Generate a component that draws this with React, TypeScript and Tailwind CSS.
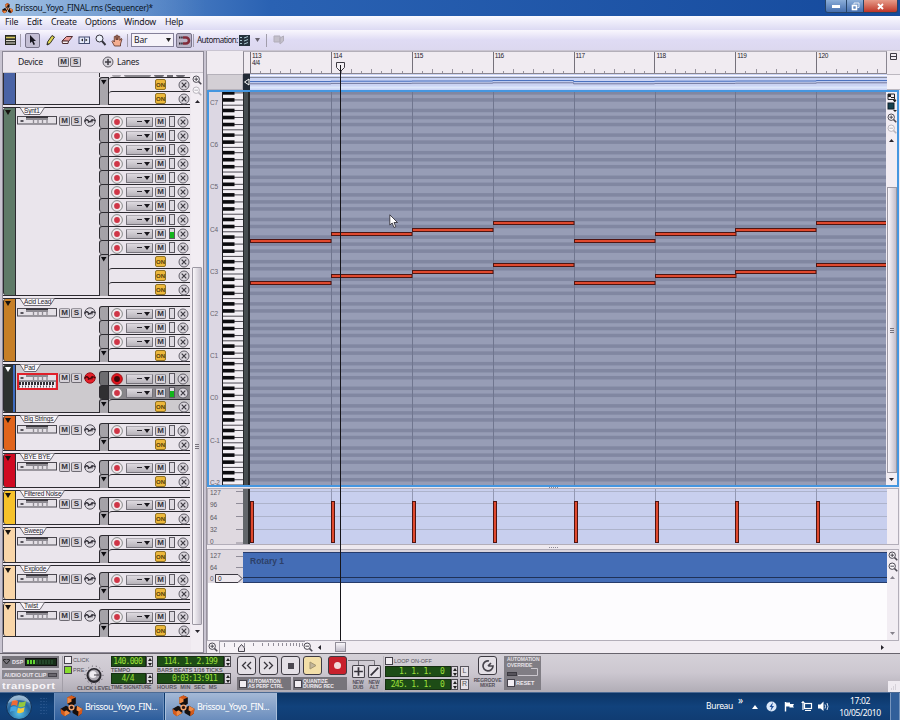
import React from "react";

const SANS = "font-['Liberation_Sans',Arial,sans-serif]";
const UI = "font-['Noto_Sans','Open_Sans',sans-serif]";

const BAR = 80.9;
const BARS = [0, 1, 2, 3, 4, 5, 6, 7];

/* ---------- small drawings ---------- */

function Propeller({ size }: { size: number }) {
  return (
    <svg width={size} height={size} viewBox="0 0 24 24" className="shrink-0">
      {[0, 120, 240].map((a) => (
        <g key={a} transform={`rotate(${a} 12 13)`}>
          <path d="M7.5 2.5 L12 .5 L16.500 2.500 V9 L12 12 L7.500 9Z" fill="#15100f" />
          <path d="M7.500 2.500 L12 .5 V7 L7.500 9Z" fill="#f08a45" />
          <path d="M12 .5 L16.500 2.500 L12 4.500 L7.500 2.500Z" fill="#d45a1c" />
        </g>
      ))}
      <circle cx="12" cy="13" r="3.200" fill="#f4a36c" />
      <circle cx="12" cy="13" r="1.700" fill="#2a1712" />
    </svg>
  );
}

function Zoom({ plus, dim }: { plus?: boolean; dim?: boolean }) {
  const c = dim ? "#b9b5bd" : "#4b4852";
  return (
    <svg width="10" height="10" viewBox="0 0 10 10" className="shrink-0">
      <circle cx="4.2" cy="4.2" r="3.2" fill="#faf8fb" stroke={c} />
      <path d={plus ? "M2.400 4.200H6M4.200 2.400V6" : "M2.400 4.200H6"} stroke={c} />
      <path d="M6.600 6.600L9.300 9.300" stroke={c} strokeWidth="1.500" />
    </svg>
  );
}

function Caret({ dir = "down", dim }: { dir?: "up" | "down" | "left" | "right"; dim?: boolean }) {
  const d = { up: "M0 4L2.500 1L5 4Z", down: "M0 1L2.500 4L5 1Z", left: "M4 0L1 2.500L4 5Z", right: "M1 0L4 2.500L1 5Z" }[dir];
  return (
    <svg width="5" height="5" viewBox="0 0 5 5" className="shrink-0">
      <path d={d} fill={dim ? "#85818b" : "#26232b"} />
    </svg>
  );
}

function Mini({ label }: { label: string }) {
  return (
    <div className={`${SANS} flex h-[10px] w-[11px] shrink-0 items-center justify-center rounded-[2px] border border-[#6d6a72] border-t-[#99969e] bg-[#d6d2d9] text-[8px] font-bold leading-none text-[#35323a]`}>
      {label}
    </div>
  );
}

function Cross() {
  return (
    <svg width="12" height="12" viewBox="0 0 12 12" className="shrink-0">
      <circle cx="6" cy="6" r="5" fill="#d9d5dc" stroke="#625f68" />
      <path d="M3.700 3.700L8.300 8.300M8.300 3.700L3.700 8.300" stroke="#3f3c44" strokeWidth="1.200" />
    </svg>
  );
}

function Record({ armed }: { armed?: boolean }) {
  return (
    <svg width="12" height="12" viewBox="0 0 12 12" className="shrink-0">
      <circle cx="6" cy="6" r="5.400" fill={armed ? "#e0141c" : "#f0e8ec"} stroke={armed ? "#8e0c12" : "#6c7371"} strokeWidth=".8" />
      <circle cx="6" cy="6" r="2.900" fill={armed ? "#3d0708" : "#cf3546"} />
    </svg>
  );
}

function AutoRec({ armed }: { armed?: boolean }) {
  return (
    <svg width="12" height="12" viewBox="0 0 12 12" className="shrink-0">
      <circle cx="6" cy="6" r="5.200" fill={armed ? "#e5202a" : "#ddd9e0"} stroke={armed ? "#9c1118" : "#55525b"} />
      <path d="M.500 6.500Q2.500 3.500 4 5.500T6.500 6.500T8.500 5T11.500 6" fill="none" stroke={armed ? "#4d0709" : "#34313a"} strokeWidth="1.400" />
      <path d="M4 8L5 6.500M8 7.500V4" stroke={armed ? "#4d0709" : "#34313a"} />
    </svg>
  );
}

function Device({ keys }: { keys?: boolean }) {
  return (
    <svg width="41" height={keys ? 17 : 9} className="shrink-0">
      <rect x=".5" y=".5" width="39" height="7.500" fill="#e4e0e6" stroke="#4b4850" />
      <rect x="9" y="0" width="22" height="2.500" fill="#3b383f" />
      <path d="M9 3.500H31" stroke="#8b8890" />
      <path d="M3.500 5h3" stroke="#57545c" strokeWidth="2" />
      <path d="M16.500 3v4M21 3v4M25.500 3v4M30 3v4" stroke="#8e8b93" strokeWidth="1.300" />
      {keys && (
        <>
          <rect x="2" y="9" width="36" height="6" fill="#f2eef3" />
          <path d="M2 10.500H38" stroke="#302d34" strokeWidth="3" strokeDasharray="2 1" />
          <path d="M2 13.500H38" stroke="#5a575f" strokeWidth="2" strokeDasharray="1 2" />
          <rect x="1" y="1" width="39" height="15" fill="none" stroke="#e0202a" strokeWidth="2" />
        </>
      )}
    </svg>
  );
}

/* ---------- track list ---------- */

type Lane = "lane" | "live" | "armed" | "selected" | "on";

function LaneRow({ kind, first }: { kind: Lane; first: boolean }) {
  if (kind === "on") {
    return (
      <div className="flex h-[14px]">
        <div className={`w-[10px] shrink-0 border-x border-[#2c2a30] bg-[#a9a6ac] ${first ? "rounded-tl-[3px] border-t" : ""}`}>
          {first && (
            <svg width="8" height="8" viewBox="0 0 8 8">
              <path d="M1 2H6.500L3.700 6.500Z" fill="#0d0c10" />
            </svg>
          )}
        </div>
        <div className="flex flex-1 items-center rounded-tl-[3px] border-t border-[#2c2a30]">
          <div className={`${SANS} ml-[46px] flex h-[11px] w-[11px] items-center justify-center rounded-[2px] border border-[#8f7226] bg-[#edb83b] text-[6px] font-bold leading-none text-[#553e0b]`}>
            ON
          </div>
          <div className="ml-[12px]"><Cross /></div>
        </div>
      </div>
    );
  }
  const sel = kind === "selected";
  return (
    <div className="flex h-[14px]">
      <div className={`w-[10px] shrink-0 rounded-l-[3px] border border-b-0 border-[#2c2a30] ${sel ? "bg-[#302f32]" : kind === "armed" ? "bg-[#6d6c70]" : "bg-[#a5a2a8]"}`} />
      <div className={`flex flex-1 items-center border-t border-[#2c2a30] pl-[2px] ${sel ? "bg-[#89868b]" : ""}`}>
        <Record armed={kind === "armed"} />
        <div className="ml-[3px] flex h-[10px] w-[27px] items-center justify-end rounded-[1px] border border-[#75727a] border-t-[#aca9b0] bg-gradient-to-b from-[#dedae0] to-[#b7b3ba] pr-[2px]">
          <i className="mr-[2px] h-[1px] w-[5px] bg-[#2d2a31]" />
          <svg width="6" height="4"><path d="M0 0H6L3 4Z" fill="#18161c" /></svg>
        </div>
        <div className="ml-[2px]"><Mini label="M" /></div>
        <div className="ml-[3px] flex h-[11px] w-[6px] flex-col justify-end border border-[#5b5860] bg-[#dedae1]">
          {(kind === "live" || sel) && <i className="h-[6px] bg-[#12b51b]" />}
        </div>
        <div className="ml-[2px]"><Cross /></div>
      </div>
    </div>
  );
}

type TrackData = { name: string; head: string; color: string; tab: number; lanes: Lane[]; active?: boolean };

const TRACKS: TrackData[] = [
  { name: "Synt1", head: "h-[9px]", color: "bg-[#5f7a68]", tab: 18, lanes: ["lane", "lane", "lane", "lane", "lane", "lane", "lane", "lane", "live", "lane", "on", "on", "on"] },
  { name: "Acid Lead", head: "h-[10px]", color: "bg-[#c67f27]", tab: 28, lanes: ["lane", "lane", "lane", "on"] },
  { name: "Pad", head: "h-[9px]", color: "bg-[#2e3230]", tab: 14, lanes: ["armed", "selected", "on"], active: true },
  { name: "Big Strings", head: "h-[10px]", color: "bg-[#e0641c]", tab: 32, lanes: ["lane", "on"] },
  { name: "BYE BYE", head: "h-[9px]", color: "bg-[#cf0a22]", tab: 28, lanes: ["lane", "on"] },
  { name: "Filtered Noise", head: "h-[9px]", color: "bg-[#f6c22b]", tab: 38, lanes: ["lane", "on"] },
  { name: "Sweep", head: "h-[10px]", color: "bg-[#f9d6a9]", tab: 20, lanes: ["lane", "on"] },
  { name: "Explode", head: "h-[9px]", color: "bg-[#f9d6a9]", tab: 24, lanes: ["lane", "on"] },
  { name: "Twist", head: "h-[9px]", color: "bg-[#f9d6a9]", tab: 18, lanes: ["lane", "on"] },
];

function Track({ t }: { t: TrackData }) {
  const on = t.lanes.indexOf("on");
  return (
    <div className="flex shrink-0 flex-col pt-[2px]">
      <div className={`flex border-y border-[#2c2a30] ${t.active ? "bg-[#cdcace]" : "bg-[#eae5ec]"}`}>
        <div className={`flex w-[13px] shrink-0 rounded-l-[3px] border-x border-[#2c2a30] ${t.color}`}>
          <svg width="8" height="9" viewBox="0 0 8 9" className="shrink-0">
            <path d="M1 2H7L4 7Z" fill={t.active ? "#fff" : "#17120f"} />
          </svg>
          {t.active && <i className="ml-[1px] w-[3px] bg-[#3e6cc0]" />}
        </div>
        <div className="flex flex-1 flex-col">
          <div className={`${t.head} -mt-[3px] flex`}>
            <div className="relative ml-[4px] mt-[2px] h-[8px]">
              <svg width={t.tab + 8} height="8" className="block">
                <path d={`M0 .5L4.500 7.500H${t.tab + 2}L${t.tab + 6.5} .5`} fill="#faf7fb" stroke="#4b4850" strokeWidth=".8" />
              </svg>
              <span className={`${SANS} absolute left-[4px] top-0 whitespace-nowrap text-[6.500px] leading-[7px] tracking-[-0.2px] text-[#26232b]`}>{t.name}</span>
            </div>
          </div>
          <div className="flex">
            <div className="flex w-[83px] shrink-0 items-start pl-[1px] pt-[2px]">
              <Device keys={t.active} />
              <div className="ml-[1px]"><Mini label="M" /></div>
              <div className="ml-[1px]"><Mini label="S" /></div>
              <div className="-mt-[1px] ml-[2px]"><AutoRec armed={t.active} /></div>
            </div>
            <div className="-mb-[1px] flex-1">
              {t.lanes.map((k, i) => <LaneRow key={i} kind={k} first={i === on} />)}
            </div>
          </div>
        </div>
      </div>
    </div>
  );
}

function TrackPanel() {
  return (
    <div className="flex w-[202px] shrink-0 flex-col border border-[#8d8996] bg-[#eee8ef]">
      <div className={`${UI} flex h-[21px] shrink-0 items-center border-b border-[#c9c5cd] text-[8.600px] tracking-[-0.3px] text-[#24222a]`}>
        <span className="ml-[15px] w-[40px]">Device</span>
        <Mini label="M" />
        <div className="ml-[1px]"><Mini label="S" /></div>
        <svg width="12" height="12" className="ml-[21px]">
          <circle cx="6" cy="6" r="5" fill="#d9d5dc" stroke="#625f68" />
          <path d="M3 6H9M6 3V9" stroke="#3f3c44" strokeWidth="1.500" />
        </svg>
        <span className="ml-[3px]">Lanes</span>
      </div>
      <div className="flex min-h-0 flex-1">
        <div className="flex w-[187px] shrink-0 flex-col overflow-hidden">
          <div className="flex h-[32px] shrink-0 border-b border-[#2c2a30]">
            <div className="w-[13px] shrink-0 border-x border-[#2c2a30] bg-[#4a63a5]" />
            <div className="w-[83px] bg-[#eae5ec]" />
            <div className="flex-1">
              <div className="flex h-[4px] items-end gap-[3px] border-l border-[#2c2a30] pl-[12px]">
                <i className="h-[2px] w-[9px] rounded-b bg-[#a7a3aa]" />
                <i className="h-[2px] w-[27px] rounded-b bg-[#8b888f]" />
                <i className="h-[2px] w-[10px] rounded-b bg-[#6d6a72]" />
                <i className="h-[2px] w-[6px] bg-[#6d6a72]" />
                <i className="h-[2px] w-[9px] rounded-b bg-[#6d6a72]" />
              </div>
              <LaneRow kind="on" first />
              <LaneRow kind="on" first={false} />
            </div>
          </div>
          {TRACKS.map((t) => <Track key={t.name} t={t} />)}
        </div>
        <div className="ml-[1px] flex flex-1 flex-col items-center bg-[#f2edf3] pt-[2px]">
          <Zoom plus />
          <div className="mt-[1px]"><Zoom dim /></div>
          <div className="mt-[3px]"><Caret dir="up" /></div>
          <div className="mt-[163px] flex h-[358px] w-[10px] items-center justify-center rounded-[1px] border border-[#9c98a3] bg-gradient-to-r from-[#faf7fb] to-[#c7c2cd]">
            <div className="flex flex-col gap-[1px]">
              <i className="h-px w-[4px] bg-[#77737d]" /><i className="h-px w-[4px] bg-[#77737d]" /><i className="h-px w-[4px] bg-[#77737d]" />
            </div>
          </div>
          <div className="mt-[4px]"><Caret /></div>
        </div>
      </div>
    </div>
  );
}

/* ---------- arrangement ---------- */

const SEMI = 42.2 / 12;
const OCTAVES = [8, 7, 6, 5, 4, 3, 2, 1, 0, -1, -2];
const floorOf = (o: number) => 105.2 - 92 + (7 - o) * 42.2;
const BLACK = [1, 3, 6, 8, 10];

function Keyboard() {
  return (
    <svg width="21" height="393" className="block shrink-0 bg-[#f3eff4]">
      {OCTAVES.map((o) => (
        <g key={o}>
          {[0, 5].map((k) => <path key={k} d={`M0 ${floorOf(o) - k * SEMI}H21`} stroke="#39363e" strokeWidth=".9" />)}
          {BLACK.map((k) => {
            const y = floorOf(o) - (k + 0.5) * SEMI;
            return (
              <g key={k}>
                <path d={`M12 ${y}H21`} stroke="#39363e" strokeWidth=".9" />
                <rect x="0" y={y - 1.8} width="12.500" height="3.600" fill="#0c0b0f" />
              </g>
            );
          })}
        </g>
      ))}
      <path d="M.5 0V393" stroke="#1b191f" />
    </svg>
  );
}

const STEPS = [3, 1, 0, -2, 3, 1, 0, -2];
const NOTE_Y = STEPS.map((s) => 137 + s * 3.5);

function Roll() {
  return (
    <svg width="636" height="393" className="block shrink-0 bg-[#979db6]">
      {OCTAVES.map((o) => BLACK.map((k) => (
        <rect key={`${o}${k}`} x="0" y={floorOf(o) - (k + 1) * SEMI} width="636" height={SEMI} fill="#8187a1" />
      )))}
      {BARS.slice(1).map((b) => <path key={b} d={`M${Math.round(b * BAR) + 0.5} 0V393`} stroke="#70768f" />)}
      {BARS.map((b) => [0, 42.2].map((dy) => (
        <rect key={`${b}-${dy}`} x={Math.round(b * BAR) + 0.5} y={Math.round(NOTE_Y[b] + dy) - 0.5} width="80.500" height="3" fill="#e0492e" stroke="#4f1512" />
      )))}
    </svg>
  );
}

function Ruler() {
  return (
    <div className="flex h-[23px] shrink-0">
      <div className="w-[36px] shrink-0" />
      <div className="flex w-[644px] shrink-0 border-x border-b border-t border-[#8a8690] border-t-[#b3afb9] bg-[#f0ebf1]">
        <div className="w-[6px] shrink-0" />
        <div className="flex w-[636px] overflow-hidden">
          {BARS.map((b) => (
            <div key={b} className={`${SANS} flex w-[80.900px] shrink-0 flex-col justify-between border-l border-[#75717b] text-[6.500px] leading-[7px] tracking-[-0.4px] text-[#26232b]`}>
              <div className="pl-[1px]">{113 + b}{b === 0 && <div>4/4</div>}</div>
              <div className="flex items-end">
                {[1, 2, 3, 4, 5, 6, 7].map((i) => (
                  <i key={i} className={`w-[10.100px] border-r border-[#98949f] ${i % 2 ? "h-[2px]" : "h-[4px]"}`} />
                ))}
              </div>
            </div>
          ))}
        </div>
      </div>
      <div className="flex flex-1 justify-center pt-[2px]">
        <svg width="9" height="8"><path d="M1.500 .5H7.500V6.500H1.500ZM1.500 3.500H7.500" fill="none" stroke="#3d3a43" /></svg>
      </div>
    </div>
  );
}

function Overview() {
  const line = (base: number) => BARS.map((b) => `${b ? "L" : "M"}${b * BAR} ${base + STEPS[b] * 0.2}H${(b + 1) * BAR}`).join("");
  return (
    <div className="flex h-[16px] shrink-0">
      <div className="w-[36px] shrink-0 border border-[#b5b1ba] bg-[#d3cfd5]" />
      <div className="flex w-[7px] shrink-0 items-center bg-[#222a36]">
        <svg width="7" height="8"><path d="M6 1L1.500 4L6 7Z" fill="none" stroke="#fff" /></svg>
      </div>
      <svg width="637" height="16" className="shrink-0 bg-[#cbd4f4]">
        <path d="M0 1.500H637" stroke="#fbf9fd" />
        <path d="M0 3.500H637" stroke="#858a9c" />
        <path d={line(7)} fill="none" stroke="#3e68ba" />
        <path d={line(9.2)} fill="none" stroke="#72779c" />
        <path d="M0 13.500H637" stroke="#dde7fb" strokeWidth="2" />
      </svg>
      <div className="flex-1 border-y border-[#bcb8c0] bg-[#f5f1f6]" />
    </div>
  );
}

function PianoRoll() {
  return (
    <div className="flex h-[397px] w-[692px] shrink-0 overflow-hidden border-2 border-[#4596e0]">
      <div className={`${SANS} flex w-[13px] shrink-0 flex-col bg-[#dcd7e3] pt-[7px] text-[6.500px] text-[#67646f]`}>
        {["C7", "C6", "C5", "C4", "C3", "C2", "C1", "C0", "C-1", "C-2"].map((c) => (
          <div key={c} className="h-[42.200px] shrink-0 pl-[1px] leading-[8px] tracking-[-0.3px]">{c}</div>
        ))}
      </div>
      <Keyboard />
      <div className="w-[7px] shrink-0 border-x border-r-2 border-[#25272a] bg-[#474d50]" />
      <Roll />
      <div className="flex flex-1 flex-col items-center overflow-hidden bg-[#f2edf3] pt-[1px]">
        <svg width="10" height="9" className="shrink-0"><path d="M1 1H7.500V6.500H1Z" fill="#f2edf3" stroke="#22262c" /><path d="M1 1H4V4H1Z" fill="#222" /><path d="M4 4.500H8M6.500 7L9 7L7.700 9Z" stroke="#222" /></svg>
        <svg width="10" height="10" className="shrink-0"><rect x="1" y="1" width="6" height="6" fill="#15404e" stroke="#0e1e2a" /><path d="M6 8H10L8 10Z" fill="#222" /></svg>
        <div className="mt-[1px]"><Zoom plus /></div>
        <div className="mt-[1px]"><Zoom dim /></div>
        <div className="mt-[4px]"><Caret dir="up" /></div>
        <div className="mt-[44px] flex h-[286px] w-[10px] shrink-0 items-center justify-center border border-[#9c98a3] bg-gradient-to-r from-[#faf7fb] to-[#c3becb]">
          <div className="flex flex-col gap-[1px]">
            <i className="h-px w-[4px] bg-[#77737d]" /><i className="h-px w-[4px] bg-[#77737d]" /><i className="h-px w-[4px] bg-[#77737d]" />
          </div>
        </div>
        <div className="mt-[4px]"><Caret /></div>
      </div>
    </div>
  );
}

function Velocity() {
  return (
    <div className="flex h-[57px] w-[692px] shrink-0 border border-[#b3aeb9] bg-[#dfd9e0]">
      <div className={`${SANS} flex w-[35px] shrink-0 justify-between text-[6.500px] text-[#5b5863]`}>
        <div className="flex flex-col pl-[2px]">
          {["127", "96", "64", "32", "0"].map((v) => <div key={v} className="h-[12.300px] shrink-0 leading-[7px]">{v}</div>)}
        </div>
        <svg width="7" height="55"><path d="M0 2.500H7M0 14.500H7M0 27.500H7M0 40.500H7M0 54H7" stroke="#908c98" /></svg>
      </div>
      <div className="w-[7px] shrink-0 border-r-2 border-[#25272a] bg-[#62666b]" />
      <svg width="637" height="55" className="shrink-0 bg-[#c8cfee]">
        <path d="M0 2.500H637M0 14.500H637M0 27.500H637M0 40.500H637" stroke="#adb3cb" />
        {BARS.slice(1).map((b) => <path key={b} d={`M${Math.round(b * BAR) + 0.5} 0V13`} stroke="#9399b3" />)}
        {BARS.map((b) => <rect key={b} x={Math.round(b * BAR) + 0.5} y="12.500" width="3" height="41" fill="#e0492e" stroke="#4f1512" />)}
      </svg>
      <div className="flex-1 bg-[#f2edf3]" />
    </div>
  );
}

function Grip({ thin }: { thin?: boolean }) {
  return (
    <div className={`flex w-[692px] shrink-0 items-center justify-center gap-[1px] bg-[#eee9ef] ${thin ? "h-px" : "h-[4px]"}`}>
      {[0, 1, 2, 3, 4].map((i) => <i key={i} className="size-[1px] bg-[#8c8893]" />)}
    </div>
  );
}

function AutomationLane() {
  return (
    <div className="flex h-[92px] w-[692px] shrink-0 border border-[#b3aeb9] bg-[#fdfcfe]">
      <div className={`${SANS} h-[33px] w-[35px] shrink-0 bg-[#dfd9e0] pl-[2px] text-[6.500px] text-[#5b5863]`}>
        <div className="flex h-[12px] items-center justify-between">127<i className="h-px w-[7px] bg-[#908c98]" /></div>
        <div className="flex h-[11px] items-center justify-between">64<i className="h-px w-[7px] bg-[#908c98]" /></div>
        <div className="flex h-[11px] items-center gap-[1px]">
          <span className="w-[4px]">0</span>
          <div className="relative h-[9px] w-[27px] shrink-0">
            <svg width="28" height="9"><path d="M.5 .5H23L27 4.500L23 8.500H.5Z" fill="#eee9ef" stroke="#3c3942" /></svg>
            <span className="absolute left-[3px] top-[1px] leading-[7px] text-[#222]">0</span>
          </div>
        </div>
      </div>
      <div className="w-[644px] shrink-0">
        <div className="h-[2px] bg-[#dad4dc]" />
        <div className="h-[31px] border-y border-[#263b6b] bg-[#446db6]">
          <div className={`${SANS} h-[25px] border-b border-[#1f3157] pl-[7px] pt-[3px] text-[8.500px] font-bold leading-[11px] text-[#2d4068]`}>Rotary 1</div>
        </div>
      </div>
      <div className="flex flex-1 flex-col items-center bg-[#f2edf3] pt-[1px]">
        <Zoom plus />
        <div className="mt-[1px]"><Zoom /></div>
        <div className="mt-[3px]"><Caret dir="up" dim /></div>
        <div className="mt-auto mb-[4px]"><Caret dim /></div>
      </div>
    </div>
  );
}

function HScroll() {
  return (
    <div className="flex h-[12px] shrink-0 items-center bg-[#f2edf3] pl-[1px]">
      <Zoom plus />
      <svg width="86" height="12" className="ml-[1px]">
        <rect x=".5" y=".5" width="86" height="12" fill="#f6f2f7" stroke="#a19da8" />
        {[5, 15, 25, 34, 43, 49, 54, 59, 63, 67, 71, 74, 77, 80, 83].map((x) => <path key={x} d={`M${x + 0.5} 2V${x % 5 ? 5 : 6}`} stroke="#918d98" />)}
        <path d="M19.500 10.500V7L22.500 3.500L25.500 7V10.500Z" fill="#e8e3ea" stroke="#45424b" />
      </svg>
      <div className="ml-[-2px]"><Zoom /></div>
      <div className="ml-[4px]"><Caret dir="left" /></div>
      <div className="ml-[13px] h-[10px] w-[11px] border border-[#918d98] bg-gradient-to-b from-[#faf7fb] to-[#c3becb]" />
      <div className="ml-auto mr-[15px]"><Caret dir="right" /></div>
    </div>
  );
}

/* ---------- transport ---------- */

function Spin() {
  return (
    <div className="flex h-full w-[7px] shrink-0 flex-col items-center justify-center gap-[2px] border border-[#4c4951] bg-[#dcd8de]">
      <svg width="4" height="3"><path d="M0 3L2 0L4 3Z" fill="#222" /></svg>
      <svg width="4" height="3"><path d="M0 0L2 3L4 0Z" fill="#222" /></svg>
    </div>
  );
}

function Lcd({ text, w, pad = "pr-[6px]" }: { text: string; w: string; pad?: string }) {
  return (
    <div className={`${w} flex h-[11px] shrink-0`}>
      <div className={`${pad} flex min-w-0 flex-1 items-center justify-end whitespace-pre border border-[#152e11] bg-[#1d4c16] font-['DejaVu_Sans_Mono',monospace] text-[8px] leading-none tracking-[-0.720px] text-[#9fe03a]`}>{text}</div>
      <Spin />
    </div>
  );
}

function Cap({ children, className = "" }: { children: React.ReactNode; className?: string }) {
  return <span className={`${SANS} whitespace-nowrap text-[5.500px] font-bold leading-[6px] ${className.includes("text-[#") ? "" : "text-[#55525b]"} ${className}`}>{children}</span>;
}

function Key({ children, bg = "bg-[#e4e0e6]" }: { children: React.ReactNode; bg?: string }) {
  return <div className={`flex size-[19px] shrink-0 items-center justify-center rounded-[3px] border border-[#3e3b43] ${bg}`}>{children}</div>;
}

function Box({ on }: { on?: boolean }) {
  return <i className={`block size-[8px] shrink-0 border border-[#45424b] ${on ? "bg-[#86dd2c]" : "bg-[#f1edf2]"}`} />;
}

function Transport() {
  return (
    <div className="flex h-[39px] shrink-0 border-t border-[#68646d] bg-gradient-to-b from-[#d5d1d8] via-[#ccc7d0] to-[#b1adb6] pt-[2px]">
      <div className="ml-[2px] flex w-[57px] shrink-0 flex-col">
        <div className="flex h-[12px] items-center gap-[2px] bg-[#78757c] pl-[1px]">
          <svg width="7" height="6"><path d="M0 1Q3.500-1 7 1L3.500 5Z" fill="none" stroke="#222" /></svg>
          <Cap className="text-[#e9e5eb]">DSP</Cap>
          <div className="flex h-[8px] w-[32px] items-center gap-[1px] border border-[#111] bg-[#172e18] pl-[1px]">
            <i className="h-[4px] w-[2px] bg-[#61d332]" /><i className="h-[4px] w-[2px] bg-[#61d332]" /><i className="h-[4px] w-[2px] bg-[#61d332]" />
            {[0, 1, 2, 3, 4, 5].map((i) => <i key={i} className="h-[4px] w-[2px] bg-[#24462a]" />)}
          </div>
        </div>
        <div className="mt-[2px] flex h-[9px] items-center justify-between bg-[#8a878e] px-[2px]">
          <Cap className="tracking-[-0.2px] text-[#e9e5eb]">AUDIO OUT CLIP</Cap>
          <i className="h-[4px] w-[9px] border border-[#45424a] bg-[#69666d]" />
        </div>
        <div className={`${SANS} mt-[2px] origin-left scale-x-[1.180] text-[9.500px] font-bold leading-[9px] tracking-[0.400px] text-[#f8f5f9]`}>transport</div>
      </div>
      <i className="ml-[3px] w-px bg-[#a29ea7]" />
      <div className="flex w-[48px] shrink-0 flex-col">
        <div className="flex h-[29px]">
          <div className="flex flex-col gap-[2px] pl-[1px]">
            <div className="flex items-center gap-[1px]"><Box /><Cap className="!font-normal">CLICK</Cap></div>
            <div className="flex items-center gap-[1px]"><Box on /><Cap className="!font-normal">PRE</Cap></div>
          </div>
          <svg width="20" height="20" viewBox="0 0 20 20" className="-ml-[5px] mt-[9px] shrink-0">
            <circle cx="10" cy="10" r="9" fill="none" stroke="#55525b" strokeDasharray="1 3" />
            <circle cx="10" cy="10.500" r="7.500" fill="#29272d" />
            <circle cx="10" cy="10" r="5.500" fill="#aca8b0" />
            <circle cx="9" cy="9.500" r="3.500" fill="#eeebf0" />
            <path d="M10 10H15" stroke="#3c3940" />
          </svg>
        </div>
        <Cap className="ml-[14px] tracking-[-0.150px]">CLICK LEVEL</Cap>
      </div>
      <div className="flex w-[43px] shrink-0 flex-col">
        <Lcd text="140.000" w="w-[42px]" pad="pr-[3px]" />
        <Cap className="tracking-[-0.1px]">TEMPO</Cap>
        <Lcd text="4/4  " w="w-[42px]" pad="pr-[3px]" />
        <Cap className="text-[5px] tracking-[-0.150px]">TIME SIGNATURE</Cap>
      </div>
      <div className="ml-[3px] flex w-[74px] shrink-0 flex-col">
        <Lcd text="114. 1. 2.199" w="w-[74px]" />
        <Cap>BARS BEATS 1/16 TICKS</Cap>
        <Lcd text="0:03:13:911" w="w-[74px]" />
        <Cap className="flex justify-between pr-[14px]"><span>HOURS</span><span>MIN</span><span>SEC</span><span>MS</span></Cap>
      </div>
      <div className="ml-[6px] flex w-[112px] shrink-0 flex-col">
        <div className="flex gap-[3px]">
          <Key><svg width="11" height="9"><path d="M5 1L1.500 4.500L5 8M10 1L6.500 4.500L10 8" fill="none" stroke="#38353d" strokeWidth="1.300" /></svg></Key>
          <Key><svg width="11" height="9"><path d="M1 1L4.500 4.500L1 8M6 1L9.500 4.500L6 8" fill="none" stroke="#38353d" strokeWidth="1.300" /></svg></Key>
          <Key><i className="size-[6px] bg-[#4b4850]" /></Key>
          <Key bg="bg-[#f3dfa8]"><svg width="8" height="9"><path d="M1 1L7 4.500L1 8Z" fill="#c2b59a" stroke="#a39571" /></svg></Key>
          <div className="ml-[3px]"><Key bg="bg-[#c8202c]"><i className="size-[7px] rounded-full bg-[#f2dada]" /></Key></div>
        </div>
        <div className="mt-[2px] flex gap-[2px]">
          <div className="flex h-[13px] w-[54px] items-center gap-[1px] bg-[#77747b] pl-[2px]">
            <Box /><Cap className="text-[5px] tracking-[-0.1px] text-[#efebf0]"><div className="leading-[5px]">AUTOMATION<br />AS PERF CTRL</div></Cap>
          </div>
          <div className="flex h-[13px] w-[54px] items-center gap-[1px] bg-[#77747b] pl-[1px]">
            <Box /><Cap className="text-[5px] tracking-[-0.1px] text-[#efebf0]"><div className="leading-[5px]">QUANTIZE<br />DURING REC</div></Cap>
          </div>
        </div>
      </div>
      <div className="-ml-[1px] flex w-[35px] shrink-0 flex-col">
        <svg width="33" height="9"><path d="M0 4.500H26.500V9M10.500 4.500V9" fill="none" stroke="#75727a" /></svg>
        <div className="flex pl-[2px] text-center">
          {[["DUB", "M6 2V10M2 6H10"], ["ALT", "M2.500 9.500L9.500 2.500"]].map(([n, d]) => (
            <div key={n} className="flex w-[16px] flex-col items-center">
              <svg width="13" height="13" viewBox="0 0 12 12"><rect x=".5" y=".5" width="11" height="11" rx="1" fill="#e5e1e7" stroke="#45424a" /><path d={d} stroke="#34313a" strokeWidth="1.600" /></svg>
              <Cap className="mt-[2px] text-[5px] !leading-[5px] tracking-[-0.2px]">NEW<br />{n}</Cap>
            </div>
          ))}
        </div>
      </div>
      <i className="w-px bg-[#b7b3bb]" />
      <div className="ml-[1px] flex w-[86px] shrink-0 flex-col">
        <div className="flex h-[9px] items-center gap-[1px]"><Box /><Cap className="!font-normal">LOOP ON-OFF</Cap></div>
        <div className="mt-[1px] flex gap-[2px]">
          <Lcd text="1. 1. 1.  0" w="w-[73px]" /><div className={`${SANS} flex h-[11px] w-[9px] items-center justify-center border border-[#57545c] bg-[#e5e1e7] text-[7px] text-[#555]`}>L</div>
        </div>
        <div className="mt-[2px] flex gap-[2px]">
          <Lcd text="245. 1. 1.  0" w="w-[73px]" /><div className={`${SANS} flex h-[11px] w-[9px] items-center justify-center border border-[#57545c] bg-[#e5e1e7] text-[7px] text-[#555]`}>R</div>
        </div>
      </div>
      <div className="ml-[3px] flex w-[27px] shrink-0 flex-col items-center text-center">
        <Key><svg width="14" height="14"><path d="M8 2A5 5 0 1 0 12 7H7M7 7L10 4" fill="none" stroke="#48454d" strokeWidth="1.700" /></svg></Key>
        <Cap className="mt-[3px] text-[5px] !leading-[5px] tracking-[-0.150px]">REGROOVE<br />MIXER</Cap>
      </div>
      <div className="ml-[3px] flex h-[34px] w-[37px] shrink-0 flex-col bg-[#807d84] pl-[3px] pt-[1px]">
        <Cap className="text-[5px] !leading-[5.500px] tracking-[-0.1px] text-[#e4e0e6]">AUTOMATION<br />OVERRIDE</Cap>
        <div className="flex items-center">
          <i className="h-[4px] w-[10px] border border-[#3b3940] bg-[#55525a]" />
          <svg width="23" height="11"><path d="M1 7.500H20.500V.5H14" fill="none" stroke="#cbc7ce" /></svg>
        </div>
        <div className="flex items-center gap-[1px]"><Box /><Cap className="text-[#efebf0]">RESET</Cap></div>
      </div>
      <div className="ml-auto mt-auto flex h-[11px] w-[12px] items-end justify-end bg-[#efebf1] p-[2px]">
        <svg width="8" height="6"><path d="M1 5H7M3 3H7M5 1H7" stroke="#bdb9c2" strokeDasharray="1 1" /></svg>
      </div>
    </div>
  );
}

/* ---------- window chrome ---------- */

function TitleBar() {
  return (
    <div className="flex h-[16px] shrink-0 bg-gradient-to-r from-[#7ea9d9] via-[#2a62b3] via-30% to-[#154a9d]">
      <div className="flex flex-1 items-center bg-gradient-to-r from-white/30 via-transparent via-25% to-transparent">
        <div className="flex w-[14px] justify-center"><Propeller size={11} /></div>
        <span className={`${UI} ml-[1px] text-[8.400px] leading-none tracking-[-0.260px] text-[#0c1627]`}>Brissou_Yoyo_FINAL.rns (Sequencer)*</span>
      </div>
      <div className="mr-[2px] flex h-[13px] overflow-hidden rounded-b-[3px] border border-t-0 border-[#274468]">
        <div className="flex w-[20px] items-center justify-center bg-gradient-to-b from-[#8caed8] to-[#466fae]"><i className="h-[3px] w-[8px] bg-white" /></div>
        <div className="flex w-[18px] items-center justify-center border-x border-[#274468] bg-gradient-to-b from-[#8caed8] to-[#466fae]">
          <svg width="9" height="9"><path d="M3 2.500V1H8V5.500H6.500" fill="none" stroke="#e8eef8" /><rect x="1.500" y="3.500" width="4" height="4" fill="none" stroke="#fff" strokeWidth="1.600" /></svg>
        </div>
        <div className="flex w-[33px] items-center justify-center bg-gradient-to-b from-[#e69a89] to-[#bd3226]">
          <svg width="7" height="7"><path d="M1 1L6 6M6 1L1 6" stroke="#fff" strokeWidth="1.800" /></svg>
        </div>
      </div>
    </div>
  );
}

function Sep({ className = "" }: { className?: string }) {
  return <i className={`h-[13px] w-px shrink-0 bg-[#a19dab] ${className}`} />;
}

function Toolbar() {
  return (
    <div className={`${UI} flex h-[20px] shrink-0 items-center bg-gradient-to-b from-[#f9f7fd] via-[#dfdbf4] to-[#dcd8ef] text-[8.600px] text-[#222029]`}>
      <svg width="11" height="10" className="ml-[5px] shrink-0">
        <rect x=".5" y=".5" width="10" height="9" fill="#34372f" stroke="#26281f" /><path d="M1 2.500H10" stroke="#d8c85a" strokeWidth="1.500" /><path d="M1 5.500H10M1 8H10" stroke="#dedbd2" />
      </svg>
      <Sep className="ml-[4px]" />
      <div className="ml-[4px] flex size-[15px] items-center justify-center rounded-[2px] border border-[#77738a] bg-[#c3bed4]">
        <svg width="9" height="12"><path d="M2 1V9L4 7.500L5.500 11L7 10.200L5.500 7H8Z" fill="#191821" /></svg>
      </div>
      <svg width="13" height="13" className="ml-[4px]"><path d="M3 11L3.500 8L8 1.500L10.500 3L6 9.500Z" fill="#dcd34f" stroke="#36342b" /><path d="M3 11L3.500 9L5 10Z" fill="#222" /></svg>
      <svg width="13" height="10" className="ml-[4px]"><path d="M1 6L5.500 1.500H11.500L7.500 6.500Z" fill="#ec9c99" stroke="#4d2c30" /><path d="M1 6H7.500L7 8.500H1.500Z" fill="#f8f0f0" stroke="#4d2c30" /></svg>
      <svg width="13" height="9" className="ml-[4px]"><rect x="1" y="1" width="10.500" height="6.500" fill="#e5eafa" stroke="#444d70" /><path d="M3 4L5 2.500V5.500ZM9.500 4L7.500 2.500V5.500Z" fill="#222" /><path d="M6.500 1V7" stroke="#5d668a" /></svg>
      <svg width="12" height="12" className="ml-[4px]"><circle cx="4.500" cy="4.500" r="3.500" fill="#edf1fb" stroke="#35343d" /><path d="M7 7L10.500 11" stroke="#35343d" strokeWidth="1.900" /></svg>
      <svg width="12" height="13" viewBox="0 0 12 13" className="ml-[4px]"><path d="M3.500 12L1 7.500L2 6.500L3.300 8V2.500L4.500 2L5.300 6V1.200H6.700V6L7.500 2L8.800 2.500V6.500L10 4.500L11 5L9.500 10V12Z" fill="#f4ae91" stroke="#592d22" strokeWidth=".8" /></svg>
      <Sep className="ml-[4px]" />
      <div className="ml-[3px] flex h-[14px] w-[43px] items-center justify-between border border-[#85819a] bg-[#f6f3f9] px-[2px] tracking-[-0.2px]">Bar<svg width="5" height="4"><path d="M0 0H5L2.500 4Z" fill="#222" /></svg></div>
      <div className="ml-[2px] flex h-[15px] w-[16px] items-center justify-center rounded-[2px] border border-[#77738a] bg-[#b9b3c6]">
        <svg width="13" height="9"><path d="M5 1.500H8A3 3 0 0 1 8 7.500H5" fill="none" stroke="#812b3a" strokeWidth="2.600" /><path d="M1 1.500H5M1 7.500H5" stroke="#2b2931" strokeWidth="2.200" strokeDasharray="1.500 .7" /></svg>
      </div>
      <Sep className="ml-[1px]" />
      <span className="ml-[3px] w-[42px] whitespace-nowrap text-[8px] tracking-[-0.520px]">Automation:</span>
      <svg width="11" height="11" className="shrink-0"><rect x="0" y="0" width="11" height="11" fill="#26333d" /><path d="M1 2.500H3M1 5.500H3M1 8.500H3M5 3L9 1.500M5 6L9 4.500M5 9L9 7.500" stroke="#a9c6cf" /></svg>
      <svg width="5" height="4" className="ml-[5px]"><path d="M0 0H5L2.500 4Z" fill="#67636f" /></svg>
      <Sep className="ml-[6px]" />
      <svg width="12" height="10" className="ml-[6px]"><path d="M1 1H7V7H1ZM7 3L10.500 1V6L7 9Z" fill="#c3bfca" stroke="#b1adb9" /></svg>
    </div>
  );
}

function TaskBar() {
  return (
    <div className={`${UI} flex h-[28px] shrink-0 border-t border-[#4d6b94] bg-gradient-to-b from-[#0c3566] via-[#11427c] to-[#103c72] text-white`}>
      <svg width="28" height="27" viewBox="0 0 28 27" className="ml-[5px] shrink-0">
        <defs>
          <radialGradient id="orb" cx=".5" cy=".75" r=".75"><stop offset="0" stopColor="#58c3e8" /><stop offset=".6" stopColor="#23659f" /><stop offset="1" stopColor="#83a9c7" /></radialGradient>
        </defs>
        <circle cx="14" cy="14" r="12.500" fill="url(#orb)" stroke="#123055" />
        <path d="M7 8Q10 6 13 8.200L12 13Q9 11 6 13Z" fill="#ee6a35" />
        <path d="M14.300 8.700Q17 10 21 8L20 13Q17 15 13.300 13.400Z" fill="#94c83d" />
        <path d="M5.700 14.200Q9 12.200 11.800 14.300L10.700 19Q8 17 4.900 19Z" fill="#45a5e2" />
        <path d="M13 14.800Q16 16.200 19.700 14.300L18.600 19Q15 21 12 19.500Z" fill="#f8cb3b" />
        <path d="M3 10A12 12 0 0 1 25 10Q14 4 3 10Z" fill="#fff" opacity=".35" />
      </svg>
      <svg width="7" height="17" className="ml-[7px] mt-[5px]"><path d="M1 0V17M4 0V17M7 0V17" stroke="#3b649b" strokeDasharray="1 2" /></svg>
      <div className="ml-[7px] flex w-[110px] items-center border-x border-[#6c8fbd] bg-gradient-to-b from-[#6487b5] to-[#2c5d9c] pl-[5px]">
        <Propeller size={23} />
        <span className="ml-[2px] whitespace-nowrap text-[9px] tracking-[-0.480px]">Brissou_Yoyo_FIN...</span>
      </div>
      <div className="ml-[1px] flex w-[112px] items-center border-x border-[#a9bfdb] bg-gradient-to-b from-[#a5b9d6] to-[#6a8dbd] pl-[6px]">
        <Propeller size={23} />
        <span className="ml-[2px] whitespace-nowrap text-[9px] tracking-[-0.480px]">Brissou_Yoyo_FIN...</span>
      </div>
      <div className="ml-auto flex items-center text-[8.500px]">
        <span className="tracking-[-0.350px]">Bureau</span>
        <span className="mb-[13px] ml-[5px] text-[10px]">»</span>
        <svg width="6" height="4" className="ml-[9px]"><path d="M0 4L3 0L6 4Z" fill="#fff" /></svg>
        <svg width="11" height="11" className="ml-[8px]"><circle cx="5.500" cy="5.500" r="5" fill="#dce9fa" /><path d="M7 1L3.500 6H5.500L4.500 10L8 5H6Z" fill="#1d4f9b" /></svg>
        <svg width="11" height="11" className="ml-[7px]"><path d="M1.500 1V10.500" stroke="#fff" strokeWidth="1.400" /><path d="M2 1.500H6V3H10L9 5L10 6.500H5.500V5.500H2Z" fill="#fff" /></svg>
        <svg width="12" height="11" className="ml-[6px]"><rect x="3.500" y="2.500" width="7" height="5" fill="none" stroke="#fff" strokeWidth="1.200" /><path d="M4 9.500H10M2 0V4M0.500 1.500H3.500M2 4V9" stroke="#fff" strokeWidth="1.200" /></svg>
        <svg width="12" height="11" className="ml-[5px]"><path d="M0 3.500H2.500L5.500 .5V10L2.500 7.500H0Z" fill="#fff" /><path d="M7 3.500Q8 5.500 7 7.500M9 2Q11 5.500 9 9" fill="none" stroke="#d8e4f4" /></svg>
        <div className="ml-[7px] flex w-[46px] flex-col items-center whitespace-nowrap text-[8.500px] leading-[12px] tracking-[-0.380px]"><span>17:02</span><span>10/05/2010</span></div>
        <div className="ml-[7px] h-[27px] w-[10px] border-x border-[#7795bd] bg-[#315f9a]" />
      </div>
    </div>
  );
}

export default function App() {
  return (
    <div className="relative flex h-[720px] w-[900px] flex-col overflow-hidden bg-[#c9c4d1]">
      <TitleBar />
      <div className={`${UI} flex h-[14px] shrink-0 items-center bg-gradient-to-b from-[#fbfaff] to-[#dcdaf3] text-[8.800px] tracking-[-0.220px] text-[#17161e]`}>
        <span className="ml-[5px] w-[22px]">File</span>
        <span className="w-[24px]">Edit</span>
        <span className="w-[34px]">Create</span>
        <span className="w-[39px]">Options</span>
        <span className="w-[41px]">Window</span>
        <span>Help</span>
      </div>
      <Toolbar />
      <div className="flex h-[603px] shrink-0 pl-[2px] pt-[1px]">
        <TrackPanel />
        <div className="ml-[2px] flex flex-1 flex-col border-l border-[#98949f] bg-[#f0ebf1]">
          <Ruler />
          <Overview />
          <PianoRoll />
          <Grip thin />
          <Velocity />
          <Grip />
          <AutomationLane />
          <HScroll />
        </div>
      </div>
      <Transport />
      <TaskBar />
      <svg width="10" height="579" className="pointer-events-none absolute left-[336px] top-[62px]">
        <path d="M.500 .500H8.500V5.500L4.500 9.500L.500 5.500Z" fill="#f3eff4" stroke="#3e3b43" />
        <path d="M4.500 3V579" stroke="#16151a" />
      </svg>
      <svg width="10" height="15" className="pointer-events-none absolute left-[389px] top-[214px]">
        <path d="M.800 .800V11L3.200 9L5 13.500L6.800 12.700L5 8.500H8.500Z" fill="#fff" stroke="#26232b" strokeWidth=".8" />
      </svg>
    </div>
  );
}
